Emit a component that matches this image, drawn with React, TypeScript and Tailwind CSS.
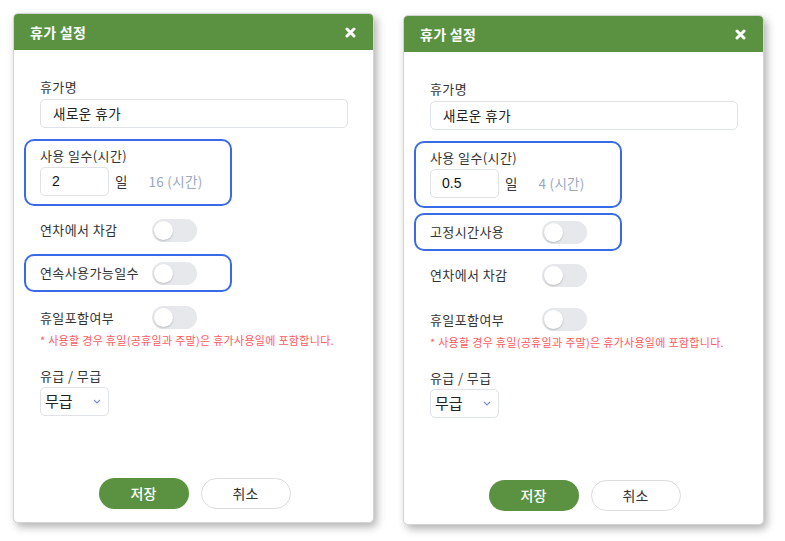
import React from 'react';

function Toggle() {
  return (
    <div className="w-[45px] h-[23px] rounded-full bg-[#e6e8ec] p-[2px] flex items-center">
      <div className="w-[19px] h-[19px] rounded-full bg-white shadow-[0_1px_2px_rgba(0,0,0,0.2)]" />
    </div>
  );
}

function ToggleRow({ label, highlight }: { label: string; highlight?: boolean }) {
  return (
    <div
      className={`-ml-[16px] w-[208px] h-[38px] mt-[5px] flex items-center px-[14px] rounded-[10px] border-2 ${
        highlight ? 'border-[#3a6ae8]' : 'border-transparent'
      }`}
    >
      <span className="w-[112px] text-[13px] leading-[18px] text-[#333] tracking-[0.4px]">{label}</span>
      <Toggle />
    </div>
  );
}

function CloseIcon() {
  return (
    <svg width="11" height="11" viewBox="0 0 11 11">
      <path d="M2 2 L9 9 M9 2 L2 9" stroke="white" strokeWidth="3" strokeLinecap="round" />
    </svg>
  );
}

function VacationDialog({ days, hours, fixedTime, offset }: { days: string; hours: string; fixedTime?: boolean; offset?: boolean }) {
  return (
    <div
      className={`w-[361px] h-[510px] flex flex-col rounded-[5px] border border-[#d4d4d4] bg-white shadow-[3px_4px_8px_rgba(0,0,0,0.3)] ${
        offset ? 'mt-[2px]' : ''
      }`}
    >
      {/* Header */}
      <div className="h-[36px] shrink-0 bg-[#5b9241] rounded-t-[4px] flex items-center justify-between pl-[16px] pr-[17px]">
        <span className="text-[14px] font-bold text-white tracking-[0.3px]">휴가 설정</span>
        <CloseIcon />
      </div>

      {/* Body */}
      <div className="flex flex-col pl-[26px] pr-[25px] pt-[28px]">
        <label className="text-[13px] leading-[18px] text-[#333] mb-[3px] tracking-[0.4px]">휴가명</label>
        <div className="h-[29px] rounded-[5px] border border-[#dfe2e6] flex items-center px-[12px] text-[13.5px] text-[#222] tracking-[0.5px]">
          새로운 휴가
        </div>

        <div className="-ml-[16px] w-[208px] mt-[11px] rounded-[10px] border-2 border-[#3a6ae8] px-[14px] pt-[6px] pb-[8px]">
          <div className="text-[13px] leading-[18px] text-[#333] tracking-[0.4px]">사용 일수(시간)</div>
          <div className="flex items-center mt-[2px]">
            <div className="w-[69px] h-[29px] rounded-[5px] border border-[#dfe2e6] flex items-center px-[11px] text-[14px] text-[#111] font-['Liberation_Sans',sans-serif]">
              {days}
            </div>
            <span className="ml-[6px] text-[13.5px] text-[#333]">일</span>
            <span className="ml-[21px] text-[13.5px] text-[#9ba6c0] tracking-[0.3px]">{hours}</span>
          </div>
        </div>

        {fixedTime && <ToggleRow label="고정시간사용" highlight />}
        <ToggleRow label="연차에서 차감" />
        {!fixedTime && <ToggleRow label="연속사용가능일수" highlight />}

        <div className="mt-[6px] pt-[8px] flex items-center">
          <span className="w-[112px] text-[13px] leading-[18px] text-[#333] tracking-[0.4px]">휴일포함여부</span>
          <Toggle />
        </div>
        <div className="mt-[3px] text-[11px] leading-[16px] text-[#ff5a5f] whitespace-nowrap tracking-[0.3px]">
          * 사용할 경우 휴일(공휴일과 주말)은 휴가사용일에 포함합니다.
        </div>

        <label className="mt-[19px] text-[13px] leading-[18px] text-[#333] mb-[2px] tracking-[0.4px]">유급 / 무급</label>
        <div className="w-[69px] h-[29px] rounded-[5px] border border-[#dfe2e6] flex items-center justify-between pl-[4px] pr-[7px] text-[15px] text-[#222]">
          <span>무급</span>
          <svg width="8" height="5" viewBox="0 0 8 5">
            <path d="M1 1 L4 4 L7 1" stroke="#7d8fd4" strokeWidth="1.2" fill="none" />
          </svg>
        </div>
      </div>

      {/* Footer */}
      <div className="mt-auto pb-[13px] flex justify-center gap-[12px] pl-[2px]">
        <button className="w-[90px] h-[31px] rounded-full bg-[#5b9241] text-white text-[14px] font-medium">저장</button>
        <button className="w-[90px] h-[31px] rounded-full bg-white border border-[#dcdcdc] text-[#333] text-[14px]">취소</button>
      </div>
    </div>
  );
}

export default function App() {
  return (
    <div className="w-[785px] h-[541px] bg-white flex items-start gap-[29px] pl-[13px] pt-[13px] font-['Noto_Sans_CJK_KR',sans-serif]">
      <VacationDialog days="2" hours="16 (시간)" />
      <VacationDialog days="0.5" hours="4 (시간)" fixedTime offset />
    </div>
  );
}
